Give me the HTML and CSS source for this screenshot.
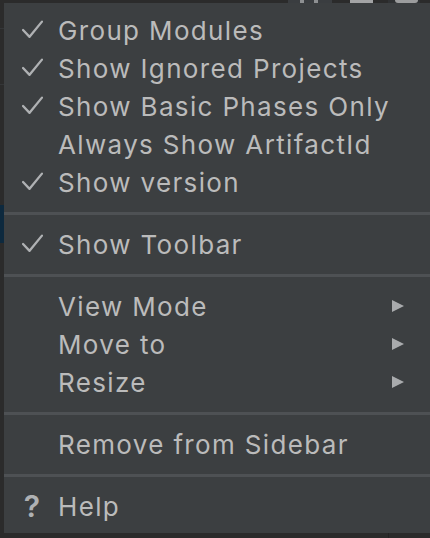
FILE: index.html
```html
<!DOCTYPE html>
<html>
<head>
<meta charset="utf-8">
<link rel="stylesheet" href="styles.css">
</head>
<body>
<div class="screen">
  <div class="topstrip">
    <div class="tb-group"><span class="tb-mark"></span><span class="tb-mark"></span></div>
    <div class="tb-light"></div>
    <div class="tb-round"><span class="tb-circle"></span></div>
  </div>
  <div class="gutter">
    <div class="g-line g-line1"></div>
    <div class="g-line g-line2"></div>
    <div class="g-sel"></div>
  </div>
  <div class="menu">
    <div class="item"><span class="ico"><svg class="check" viewBox="0 0 20 18"><path d="M1 9.5 L7.2 16 L19 1.5"/></svg></span><span class="label">Group Modules</span></div>
    <div class="item"><span class="ico"><svg class="check" viewBox="0 0 20 18"><path d="M1 9.5 L7.2 16 L19 1.5"/></svg></span><span class="label">Show Ignored Projects</span></div>
    <div class="item"><span class="ico"><svg class="check" viewBox="0 0 20 18"><path d="M1 9.5 L7.2 16 L19 1.5"/></svg></span><span class="label">Show Basic Phases Only</span></div>
    <div class="item"><span class="ico"></span><span class="label">Always Show ArtifactId</span></div>
    <div class="item"><span class="ico"><svg class="check" viewBox="0 0 20 18"><path d="M1 9.5 L7.2 16 L19 1.5"/></svg></span><span class="label">Show version</span></div>
    <div class="sep"></div>
    <div class="item"><span class="ico"><svg class="check" viewBox="0 0 20 18"><path d="M1 9.5 L7.2 16 L19 1.5"/></svg></span><span class="label">Show Toolbar</span></div>
    <div class="sep"></div>
    <div class="item"><span class="ico"></span><span class="label">View Mode</span><span class="arrow"></span></div>
    <div class="item"><span class="ico"></span><span class="label">Move to</span><span class="arrow"></span></div>
    <div class="item"><span class="ico"></span><span class="label">Resize</span><span class="arrow"></span></div>
    <div class="sep"></div>
    <div class="item"><span class="ico"></span><span class="label">Remove from Sidebar</span></div>
    <div class="sep"></div>
    <div class="item"><span class="ico help">?</span><span class="label">Help</span></div>
  </div>
  <div class="bottomstrip"><span class="bs-line"></span></div>
</div>
</body>
</html>
```

FILE: styles.css
```css
html, body {
  margin: 0;
  padding: 0;
  background: #2b2b2b;
}

.screen {
  width: 430px;
  height: 538px;
  overflow: hidden;
  display: grid;
  grid-template-columns: 4px 426px;
  grid-template-rows: 3px 530px 5px;
  font-family: Inter, "Noto Sans", sans-serif;
}

.topstrip {
  grid-column: 1 / 3;
  grid-row: 1;
  background: #2b2b2b;
  display: flex;
  align-items: stretch;
}

.tb-group {
  margin-left: 288px;
  width: 44px;
  background: #3a3d40;
  display: flex;
  gap: 10px;
  padding-left: 12px;
  box-sizing: border-box;
}

.tb-mark {
  width: 4px;
  background: #8e9092;
}

.tb-light {
  margin-left: 18px;
  width: 23px;
  background: #a3a4a5;
}

.tb-round {
  margin-left: 15px;
  width: 32px;
  background: #303234;
  display: flex;
  padding-left: 7px;
  box-sizing: border-box;
}

.tb-circle {
  width: 23px;
  background: #9c9d9e;
  border-radius: 0 0 12px 12px;
}

.gutter {
  grid-column: 1;
  grid-row: 2;
  background: #2b2b2b;
  display: flex;
  flex-direction: column;
}

.g-line {
  height: 1px;
  background: #343638;
}

.g-line1 { margin-top: 25px; }
.g-line2 { margin-top: 55px; }

.g-sel {
  margin-top: 120px;
  height: 38px;
  background: #0d293e;
}

.menu {
  grid-column: 2;
  grid-row: 2;
  background: #3c3f41;
  padding: 8px 0;
  box-sizing: border-box;
  display: flex;
  flex-direction: column;
}

.item {
  height: 38px;
  display: flex;
  align-items: center;
  padding-left: 16px;
  padding-right: 26px;
  color: #bbbbbb;
  font-size: 26px;
  letter-spacing: 1.35px;
}

.ico {
  width: 24px;
  height: 38px;
  margin-right: 14px;
  display: flex;
  align-items: center;
  justify-content: center;
  letter-spacing: 0;
}

.check {
  width: 21px;
  height: 19px;
  fill: none;
  stroke: #afb1b3;
  stroke-width: 2.2;
  stroke-linecap: round;
  stroke-linejoin: round;
  margin-top: -1px;
}

.help {
  font-size: 30px;
  font-weight: 600;
  color: #afb1b3;
}

.label {
  white-space: nowrap;
  flex: 1;
}

.arrow {
  width: 0;
  height: 0;
  border-top: 6.5px solid transparent;
  border-bottom: 6.5px solid transparent;
  border-left: 12px solid #a9abad;
}

.sep {
  height: 3px;
  margin: 11px 0 10px;
  background: #4e5154;
}

.bottomstrip {
  grid-column: 1 / 3;
  grid-row: 3;
  background: #2b2b2b;
  display: flex;
}

.bs-line {
  margin-left: 388px;
  width: 1px;
  background: #232323;
}
```
